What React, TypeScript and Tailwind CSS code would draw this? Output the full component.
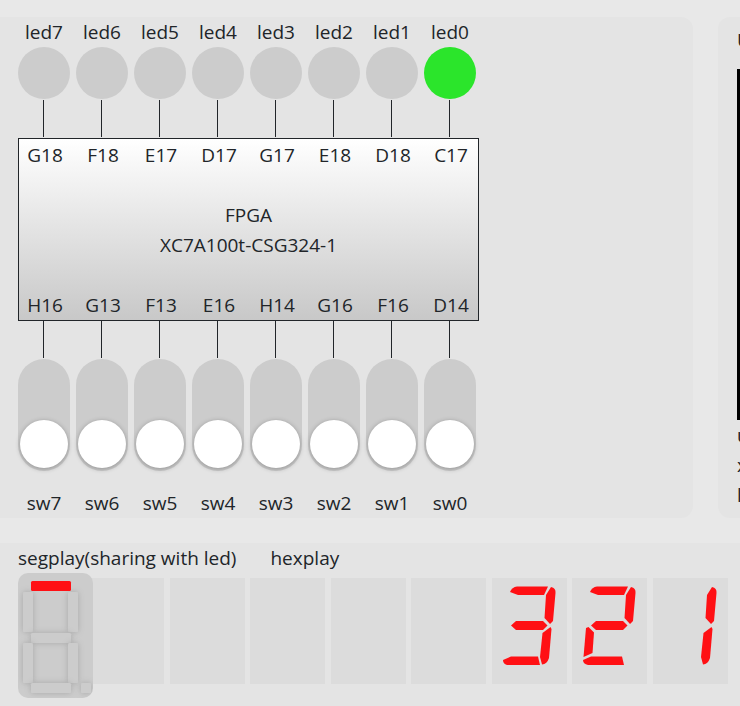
const LEDS = [
  { led: "led7", pin: "G18", on: false },
  { led: "led6", pin: "F18", on: false },
  { led: "led5", pin: "E17", on: false },
  { led: "led4", pin: "D17", on: false },
  { led: "led3", pin: "G17", on: false },
  { led: "led2", pin: "E18", on: false },
  { led: "led1", pin: "D18", on: false },
  { led: "led0", pin: "C17", on: true },
];

const SWITCHES = [
  { sw: "sw7", pin: "H16" },
  { sw: "sw6", pin: "G13" },
  { sw: "sw5", pin: "F13" },
  { sw: "sw4", pin: "E16" },
  { sw: "sw3", pin: "H14" },
  { sw: "sw2", pin: "G16" },
  { sw: "sw1", pin: "F16" },
  { sw: "sw0", pin: "D14" },
];

const HEX_DIGITS = ["", "", "", "", "", "3", "2", "1"];

// Slanted seven-segment outlines inside a 75x106 cell.
const SEGMENTS: Record<string, string> = {
  a: "M18 14 Q20 9 25 8.5 H56 L52 17 H26 Z",
  b: "M59 9 Q64 10 63.500 15 L61 43 L58 46 L52.500 40 L54 17 Z",
  c: "M58.500 49 L59.500 51 L57 80 Q55 86 50 86.500 L48 79 L50.500 55 Z",
  d: "M11 82 L19 78.500 H46 L48 87 H15 Q11 86 11 82 Z",
  // Bottom bar when nothing lights up to its right.
  dOpen: "M11 82 L19 78.500 H50 L52 87 H16 Q11 86 11 82 Z",
  e: "M16.500 49 L22 54.500 L20.500 75 L11.500 79 L14 50 Z",
  g: "M19 47.500 L24 43 H51 L55.500 47.500 L51 52 H24 Z",
};

const DIGIT_SEGMENTS: Record<string, string[]> = {
  "": [],
  "1": ["b", "c"],
  "2": ["a", "b", "g", "e", "dOpen"],
  "3": ["a", "b", "g", "c", "d"],
};

function HexCell({ digit }: { digit: string }) {
  return (
    <div className="h-[106px] w-[75px] shrink-0 bg-[#dcdcdc]">
      <svg viewBox="0 0 75 106" className="block h-full w-full" role="img" aria-label={digit || "blank"}>
        {DIGIT_SEGMENTS[digit].map((s) => (
          <path key={s} d={SEGMENTS[s]} fill="#ff1014" />
        ))}
      </svg>
    </div>
  );
}

function SegmentDisplay() {
  const bars = [
    [5, 19, 10, 40],
    [50, 19, 10, 40],
    [13, 60, 40, 10],
    [5, 70, 10, 40],
    [50, 70, 10, 40],
    [13, 110, 40, 10],
    [63, 110, 10, 10],
  ];
  return (
    <svg viewBox="0 0 75 125" className="relative z-10 block h-[125px] w-[75px] shrink-0 rounded-[10px] bg-[#cccccc]" role="img" aria-label="segplay">
      <defs>
        <filter id="seg-shadow" x="-100%" y="-100%" width="300%" height="300%">
          <feDropShadow dx="0" dy="0" stdDeviation="3" floodColor="#000" floodOpacity="0.18" />
        </filter>
      </defs>
      {bars.map(([x, y, w, h]) => (
        <rect key={`${x}-${y}`} x={x} y={y} width={w} height={h} rx="1.5" fill="#cccccc" filter="url(#seg-shadow)" />
      ))}
      <rect x="13" y="8" width="40" height="10" rx="1.5" fill="#ff1014" />
    </svg>
  );
}

function Wires() {
  return (
    <div className="flex gap-1.5" aria-hidden="true">
      {LEDS.map((l) => (
        <div key={l.led} className="flex h-[37px] w-[52px] justify-center pr-px">
          <div className="w-px bg-[#212529]" />
        </div>
      ))}
    </div>
  );
}

function Board() {
  return (
    <section className="min-w-0 flex-1 rounded-r-xl bg-[#e4e4e4] pl-[18px]">
      <div className="flex gap-1.5">
        {LEDS.map((l) => (
          <div key={l.led} className="w-[52px] pb-px text-center">
            <div>{l.led}</div>
            <div className={`h-[52px] rounded-full ${l.on ? "bg-[#2be52b]" : "bg-[#cccccc]"}`} />
          </div>
        ))}
      </div>
      <Wires />
      <div className="mt-px flex h-[183px] w-[461px] flex-col justify-between border border-[#212529] bg-linear-to-b from-white to-[#c8c8c8] pt-px">
        <div className="flex gap-1.5">
          {LEDS.map((l) => (
            <div key={l.pin} className="w-[52px] text-center">{l.pin}</div>
          ))}
        </div>
        <div className="text-center">
          <div>FPGA</div>
          <div>XC7A100t-CSG324-1</div>
        </div>
        <div className="flex gap-1.5">
          {SWITCHES.map((s) => (
            <div key={s.pin} className="w-[52px] text-center">{s.pin}</div>
          ))}
        </div>
      </div>
      <Wires />
      <div className="mt-px flex gap-1.5">
        {SWITCHES.map((s) => (
          <label key={s.sw} className="flex w-[52px] flex-col gap-[17px] text-center">
            <input type="checkbox" role="switch" className="peer sr-only" />
            <span className="flex h-28 items-end justify-center rounded-full bg-[#cccccc] pb-[3px] peer-checked:items-start peer-checked:pt-[3px]">
              <span className="h-12 w-12 rounded-full bg-white shadow-[0_1px_5px_rgba(0,0,0,0.3)]" />
            </span>
            <span>{s.sw}</span>
          </label>
        ))}
      </div>
    </section>
  );
}

function Uart() {
  return (
    <section className="w-[22px] shrink-0 overflow-hidden rounded-l-xl bg-[#e4e4e4] pt-2 pl-[19px]">
      <div className="h-11 overflow-hidden">U</div>
      <div className="h-[351px] w-[300px] bg-black" />
      <div>u</div>
      <div>x</div>
      <div>l</div>
    </section>
  );
}

export default function App() {
  return (
    <main className="min-h-screen overflow-hidden bg-[#e8e8e8] pt-[17px] font-['Open_Sans','Noto_Sans',sans-serif] text-[19px] leading-[30px] text-[#212529]">
      <div className="flex gap-[25px]">
        <Board />
        <Uart />
      </div>
      <section className="mt-[25px] min-h-[163px] bg-[#e4e4e4] pl-[18px]">
        <div className="flex gap-[34px]">
          <h2>segplay(sharing with led)</h2>
          <h2>hexplay</h2>
        </div>
        <div className="flex">
          <SegmentDisplay />
          <div className="-ml-1 mt-[5px] flex w-[639px] justify-between">
            {HEX_DIGITS.map((d, i) => (
              <HexCell key={i} digit={d} />
            ))}
          </div>
        </div>
      </section>
    </main>
  );
}
